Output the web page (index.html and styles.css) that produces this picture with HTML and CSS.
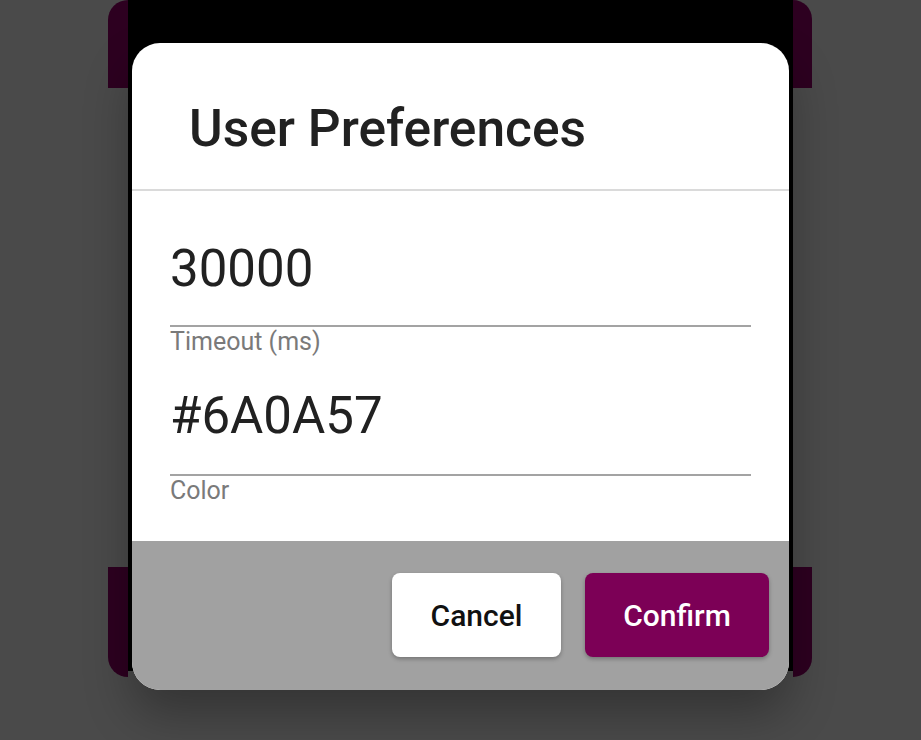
FILE: index.html
```html
<!DOCTYPE html>
<html lang="en">
<head>
<meta charset="utf-8">
<title>User Preferences</title>
<link rel="stylesheet" href="styles.css">
</head>
<body>
  <div class="app">
    <div class="bar bar-tl"></div>
    <div class="screen"></div>
    <div class="bar bar-tr"></div>
    <div class="bar bar-bl"></div>
    <div class="bar bar-br"></div>
  </div>

  <div class="dialog" role="dialog" aria-labelledby="dlg-title">
    <header class="dialog-header">
      <h1 id="dlg-title" class="dialog-title">User Preferences</h1>
    </header>
    <div class="dialog-body">
      <div class="field">
        <div class="field-value">30000</div>
        <div class="field-line"></div>
        <div class="field-label">Timeout (ms)</div>
      </div>
      <div class="field field-second">
        <div class="field-value">#6A0A57</div>
        <div class="field-line"></div>
        <div class="field-label">Color</div>
      </div>
    </div>
    <footer class="dialog-actions">
      <button class="btn btn-cancel">Cancel</button>
      <button class="btn btn-confirm">Confirm</button>
    </footer>
  </div>
</body>
</html>
```

FILE: styles.css
```css
* { box-sizing: border-box; }

html, body {
  margin: 0;
  padding: 0;
  height: 100%;
}

body {
  background: #4a4a4a;
  font-family: Roboto, "Noto Sans", sans-serif;
  overflow: hidden;
  position: relative;
}

/* dimmed app behind the dialog */
.app {
  display: grid;
  grid-template-columns: 20px 665px 19px;
  grid-template-rows: 88px 479px 110px;
  width: 704px;
  height: 677px;
  margin-left: 108px;
}

.bar { background: #2d0020; }

.bar-tl {
  grid-column: 1;
  grid-row: 1;
  border-top-left-radius: 22px;
}

.bar-tr {
  grid-column: 3;
  grid-row: 1;
  border-top-right-radius: 22px;
}

.bar-bl {
  grid-column: 1;
  grid-row: 3;
  border-bottom-left-radius: 24px;
}

.bar-br {
  grid-column: 3;
  grid-row: 3;
  border-bottom-right-radius: 24px;
}

.screen {
  grid-column: 2;
  grid-row: 1 / 4;
  background: #000;
  margin-bottom: 6px;
}

/* dialog */
.dialog {
  position: absolute;
  left: 132px;
  top: 43px;
  width: 657px;
  height: 647px;
  background: #fff;
  border-radius: 28px;
  overflow: hidden;
  display: flex;
  flex-direction: column;
  box-shadow: 0 24px 48px rgba(0, 0, 0, 0.3);
}

.dialog-header {
  height: 148px;
  flex: none;
  padding: 60px 0 0 57px;
  border-bottom: 2px solid #dadada;
}

.dialog-title {
  margin: 0;
  font-size: 51.5px;
  line-height: 52px;
  font-weight: 500;
  color: #212121;
}

.dialog-body {
  flex: 1;
  padding: 48px 38px 0 38px;
}

.field {
  display: flex;
  flex-direction: column;
}

.field-second { margin-top: 30px; }

.field-value {
  font-size: 51px;
  line-height: 60px;
  color: #212121;
}

.field-line {
  height: 2px;
  background: #a3a3a3;
  margin-top: 26px;
}

.field-second .field-line { margin-top: 28px; }

.field-label {
  font-size: 25px;
  line-height: 29px;
  color: #7a7a7a;
}

.dialog-actions {
  height: 149px;
  flex: none;
  background: #a1a1a1;
  display: flex;
  justify-content: flex-end;
  align-items: flex-start;
  gap: 24px;
  padding: 32px 20px 0 0;
}

.btn {
  height: 84px;
  border: none;
  border-radius: 8px;
  font-family: Roboto, "Noto Sans", sans-serif;
  font-size: 30px;
  font-weight: 500;
  box-shadow: 0 2px 4px rgba(0, 0, 0, 0.28);
  padding: 0;
}

.btn-cancel {
  width: 169px;
  background: #fff;
  color: #111;
}

.btn-confirm {
  width: 184px;
  background: #7c0056;
  color: #fff;
}
```
